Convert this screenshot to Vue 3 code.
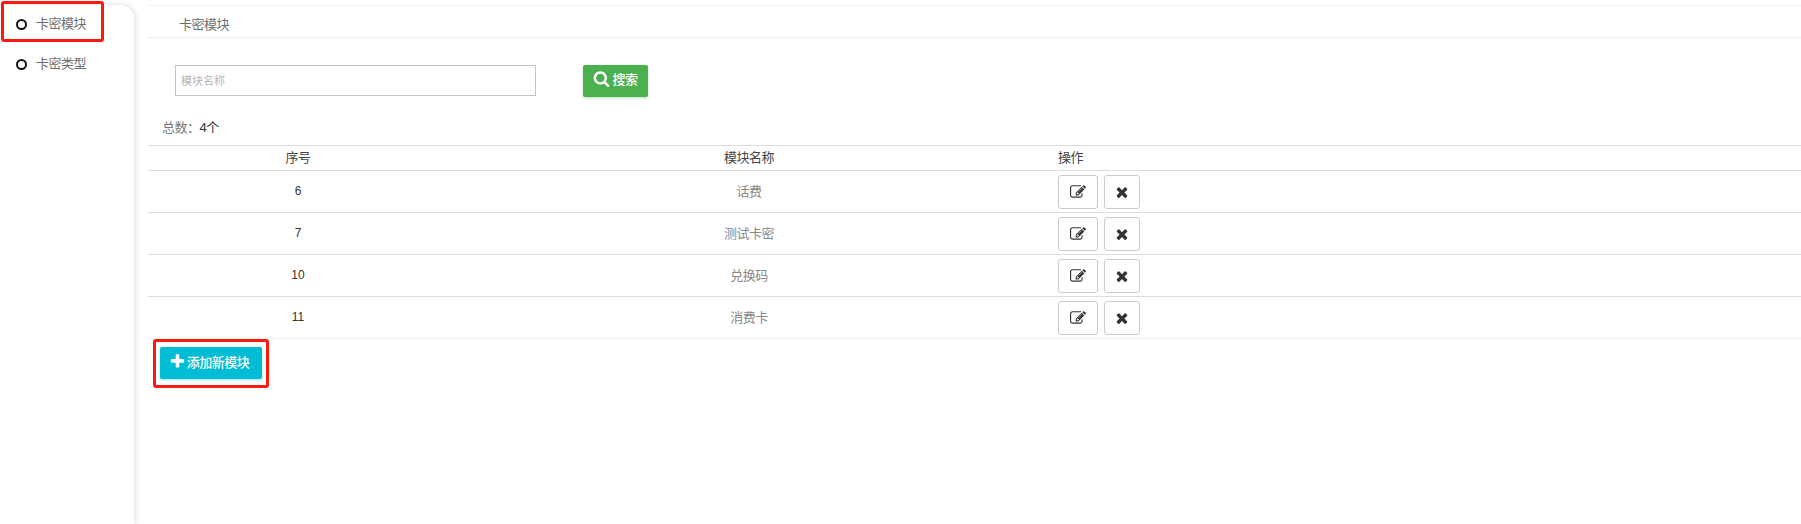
<script setup>
const navItems = [
  { name: '卡密模块', marked: true },
  { name: '卡密类型', marked: false }
]
const rows = [
  { id: 6, name: '话费' },
  { id: 7, name: '测试卡密' },
  { id: 10, name: '兑换码' },
  { id: 11, name: '消费卡' }
]
const paths = {
  search: 'M1216 832q0-185-131.500-316.500t-316.500-131.500-316.500 131.500-131.500 316.500 131.500 316.500 316.500 131.500 316.500-131.500 131.500-316.500zm512 832q0 52-38 90t-90 38q-54 0-90-38l-343-342q-179 124-399 124-143 0-273.500-55.500t-225-150-150-225-55.500-273.500 55.500-273.500 150-225 225-150 273.500-55.500 273.500 55.500 225 150 150 225 55.500 273.500q0 220-124 399l343 343q37 37 37 90z',
  plus: 'M1600 736v192q0 40-28 68t-68 28h-416v416q0 40-28 68t-68 28h-192q-40 0-68-28t-28-68v-416h-416q-40 0-68-28t-28-68v-192q0-40 28-68t68-28h416v-416q0-40 28-68t68-28h192q40 0 68 28t28 68v416h416q40 0 68 28t28 68z',
  edit: 'M888 1184l116-116-152-152-116 116v56h96v96h56zm440-720q-16-16-33 1l-350 350q-17 17-1 33t33-1l350-350q17-17 1-33zm80 594v190q0 119-84.500 203.500t-203.500 84.500h-832q-119 0-203.500-84.500t-84.500-203.500v-832q0-119 84.500-203.500t203.500-84.500h832q63 0 117 25 15 7 18 23 3 17-9 29l-49 49q-14 14-32 8-23-6-45-6h-832q-66 0-113 47t-47 113v832q0 66 47 113t113 47h832q66 0 113-47t47-113v-126q0-13 9-22l64-64q15-15 35-7t20 29zm-96-738l288 288-672 672h-288v-288zm444 132l-92 92-288-288 92-92q28-28 68-28t68 28l152 152q28 28 28 68t-28 68z',
  times: 'M1490 1322q0 40-28 68l-136 136q-28 28-68 28t-68-28l-294-294-294 294q-28 28-68 28t-68-28l-136-136q-28-28-28-68t28-68l294-294-294-294q-28-28-28-68t28-68l136-136q28-28 68-28t68 28l294 294 294-294q28-28 68-28t68 28l136 136q28 28 28 68t-28 68l-294 294 294 294q28 28 28 68z'
}
</script>

<template>
  <div class="page">
    <aside class="sidebar">
      <div v-for="item in navItems" :key="item.name" class="nav-item">
        <span class="dot"></span>
        <span class="nav-text">{{ item.name }}</span>
        <span v-if="item.marked" class="mark"></span>
      </div>
    </aside>

    <main class="main">
      <div class="crumb">卡密模块</div>

      <form class="search" @submit.prevent>
        <input class="search-input" type="text" placeholder="模块名称" />
        <button class="btn btn-green" type="submit">
          <svg class="icon-search" viewBox="0 0 1792 1792"><path :d="paths.search" /></svg>
          搜索
        </button>
      </form>

      <div class="total">总数：<span class="total-num">4个</span></div>

      <table class="grid">
        <colgroup>
          <col class="col-id" />
          <col class="col-name" />
          <col />
        </colgroup>
        <thead>
          <tr>
            <th>序号</th>
            <th>模块名称</th>
            <th class="left">操作</th>
          </tr>
        </thead>
        <tbody>
          <tr v-for="row in rows" :key="row.id">
            <td class="id"><span class="cell-text">{{ row.id }}</span></td>
            <td class="name"><span class="cell-text">{{ row.name }}</span></td>
            <td class="actions">
              <div class="action-row">
                <button class="tool tool-edit" type="button">
                  <svg viewBox="0 0 1792 1792"><path :d="paths.edit" /></svg>
                </button>
                <button class="tool tool-del" type="button">
                  <svg viewBox="0 0 1792 1792"><path :d="paths.times" /></svg>
                </button>
              </div>
            </td>
          </tr>
        </tbody>
      </table>

      <div class="add-mark">
        <button class="btn btn-cyan" type="button">
          <svg class="icon-plus" viewBox="0 0 1792 1792"><path :d="paths.plus" /></svg>
          添加新模块
        </button>
      </div>
    </main>
  </div>
</template>

<style>
html, body {
  margin: 0;
  background: #fff;
}
</style>

<style scoped>
.page {
  display: flex;
  width: 1801px;
  height: 524px;
  overflow: hidden;
  background: #fff;
  font-family: "Liberation Sans", "Noto Sans CJK SC", sans-serif;
  font-size: 13px;
  letter-spacing: -0.5px;
  color: #777;
}
.sidebar {
  flex: none;
  width: 134px;
  margin-top: 5px;
  border-top-right-radius: 14px;
  background: #fff;
  box-shadow: 1px 0 7px rgba(0, 0, 0, 0.14);
  position: relative;
  z-index: 1;
}
.nav-item {
  position: relative;
  display: flex;
  align-items: center;
  gap: 9px;
  height: 40px;
  padding-left: 16px;
  margin-top: -1px;
  color: #6e6e6e;
}
.nav-item + .nav-item {
  margin-top: 0;
}
.nav-text {
  margin-bottom: 3px;
}
.dot {
  width: 7px;
  height: 7px;
  border: 2px solid #111;
  border-radius: 50%;
}
.mark {
  position: absolute;
  left: 1px;
  top: -3px;
  width: 97px;
  height: 35px;
  border: 3px solid #fb1a12;
  border-radius: 3px;
}
.main {
  flex: 1;
  min-width: 0;
  padding: 5px 0 0 14px;
}
.crumb {
  height: 31px;
  line-height: 37px;
  padding-left: 31px;
  border-top: 1px solid #f3f3f3;
  border-bottom: 1px solid #eee;
  color: #6e6e6e;
}
.search {
  display: flex;
  align-items: flex-start;
  gap: 47px;
  margin: 27px 0 0 27px;
}
.search-input {
  box-sizing: border-box;
  width: 361px;
  height: 31px;
  padding: 0 5px;
  border: 1px solid #c4c4c4;
  outline: none;
  font: 11px "Liberation Sans", "Noto Sans CJK SC", sans-serif;
}
.search-input::placeholder {
  color: #b5b5b5;
}
.btn {
  display: inline-flex;
  align-items: center;
  justify-content: center;
  height: 32px;
  padding: 0;
  border: none;
  border-radius: 2px;
  color: #fff;
  font: 500 13px "Liberation Sans", "Noto Sans CJK SC", sans-serif;
  letter-spacing: -0.5px;
}
.btn svg {
  fill: #fff;
}
.btn-green {
  width: 65px;
  padding-bottom: 5px;
  background: #4caf50;
  box-shadow: 0 1px 3px rgba(76, 175, 80, 0.4);
  gap: 2px;
}
.icon-search {
  width: 17px;
  height: 17px;
}
.total {
  margin: 22px 0 0 14px;
  line-height: 18px;
  height: 18px;
}
.total-num {
  color: #333;
}
.grid {
  width: 100%;
  margin-top: 8px;
  border-collapse: collapse;
  table-layout: fixed;
}
.col-id {
  width: 300px;
}
.col-name {
  width: 602px;
}
th {
  height: 21px;
  padding: 0 0 3px;
  border-top: 1px solid #ddd;
  border-bottom: 1px solid #ddd;
  font-weight: 400;
  color: #444;
  text-align: center;
}
th.left {
  text-align: left;
  padding-left: 8px;
}
td {
  height: 41px;
  padding: 0;
  border-bottom: 1px solid #ddd;
  text-align: center;
}
.cell-text {
  display: block;
  margin-bottom: 2px;
}
tbody tr:last-child td {
  border-bottom-color: #f0f0f0;
}
.id {
  color: #333;
  font-size: 12px;
  letter-spacing: 0;
}
.name {
  color: #888;
}
.actions {
  text-align: left;
  padding-left: 8px;
}
.action-row {
  display: flex;
  gap: 6px;
}
.tool {
  display: flex;
  align-items: center;
  justify-content: center;
  height: 34px;
  padding: 0;
  background: #fff;
  border: 1px solid #ccc;
  border-radius: 3px;
}
.tool svg {
  fill: #333;
  width: 16px;
  height: 16px;
}
.tool-edit {
  width: 40px;
}
.tool-del {
  width: 36px;
}
.add-mark {
  box-sizing: border-box;
  width: 116px;
  height: 49px;
  margin: 0 0 0 5px;
  padding: 5px 0 0 4px;
  border: 3px solid #fb1a12;
  border-radius: 3px;
}
.btn-cyan {
  width: 102px;
  padding: 0 4px 4px 0;
  background: #00bcd4;
  box-shadow: 0 1px 3px rgba(0, 188, 212, 0.4);
  gap: 1px;
}
.icon-plus {
  width: 17px;
  height: 17px;
}
</style>
